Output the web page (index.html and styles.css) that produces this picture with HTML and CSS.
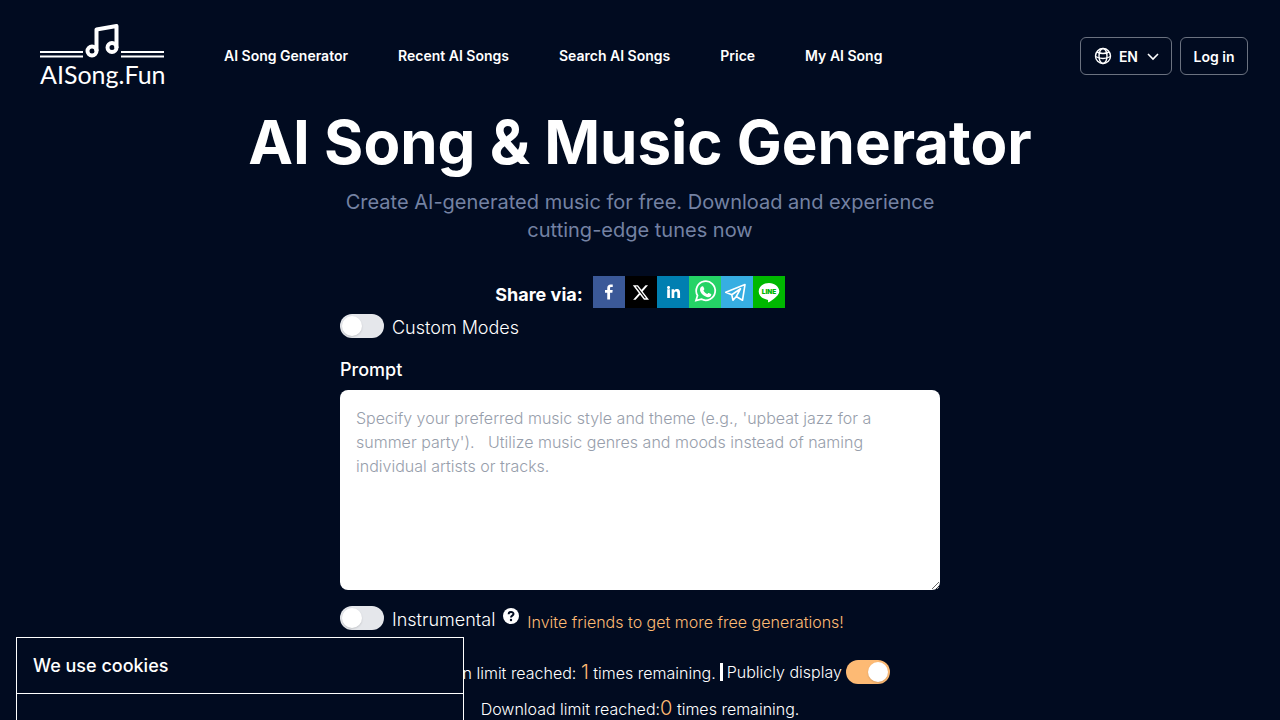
FILE: index.html
```
<!DOCTYPE html>
<html lang="en">
<head>
    <meta charset="UTF-8">
    <meta name="viewport" content="width=device-width, initial-scale=1.0">
    <title>AI Song &amp; Music Generator</title>
    <link rel="stylesheet" href="styles.css">
</head>
<body>
    <header class="header">
        <a class="logo" href="#">
            <svg class="logo-mark" viewBox="0 0 124 35" aria-hidden="true">
                <path class="logo-bars" d="M0 28h43M0 32.500h43M81 28h43M81 32.500h43"/>
                <path class="logo-note" d="M56.500 27V5.500L76.500 2V24"/>
                <circle class="logo-note" cx="52" cy="27" r="4.500"/>
                <circle class="logo-note" cx="72" cy="23.500" r="4.500"/>
            </svg>
            <span class="logo-text">AISong.Fun</span>
        </a>
        <nav class="nav">
            <a href="#">AI Song Generator</a>
            <a href="#">Recent AI Songs</a>
            <a href="#">Search AI Songs</a>
            <a href="#">Price</a>
            <a href="#">My AI Song</a>
        </nav>
        <div class="actions">
            <button class="btn btn-lang" type="button">
                <svg class="globe" viewBox="0 0 20 20" aria-hidden="true">
                    <circle cx="10" cy="10" r="7.500"/>
                    <ellipse cx="10" cy="10" rx="4" ry="7.500"/>
                    <path d="M4 6Q10 9 16 6M2.500 10.500Q10 14.500 17.500 10.500"/>
                </svg>
                <span>EN</span>
                <svg class="chevron" viewBox="0 0 16 16" aria-hidden="true"><path d="M3 6L8 11L13 6"/></svg>
            </button>
            <button class="btn" type="button">Log in</button>
        </div>
    </header>

    <main class="main">
        <h1>AI Song &amp; Music Generator</h1>
        <p class="subtitle">Create AI-generated music for free. Download and experience cutting-edge tunes now</p>

        <div class="share">
            <span class="share-label">Share via:</span>
            <a class="facebook" href="#" aria-label="Facebook">
                <svg viewBox="0 0 64 64"><path fill="#fff" d="M34.1 47V33.300h4.600l.7-5.300h-5.300v-3.400c0-1.500.4-2.600 2.600-2.600h2.800v-4.800c-.5-.1-2.200-.2-4.100-.2-4.100 0-6.900 2.500-6.900 7V28H24v5.300h4.500V47h5.600z"/></svg>
            </a>
            <a class="x" href="#" aria-label="X">
                <svg viewBox="0 0 64 64"><path fill="#fff" d="M41.116 18.375h4.962l-10.840 12.390 12.753 16.860H38.005l-7.821-10.225L21.235 47.625H16.270l11.595-13.252L15.631 18.375H25.870l7.070 9.347zm-1.742 26.280h2.750L24.376 21.190h-2.950z"/></svg>
            </a>
            <a class="linkedin" href="#" aria-label="LinkedIn">
                <svg viewBox="0 0 64 64"><path fill="#fff" d="M20.400 44h5.400V26.600h-5.400V44zm2.700-18c1.700 0 3.100-1.400 3.100-3.100s-1.400-3.100-3.100-3.100-3.100 1.400-3.100 3.100 1.400 3.100 3.100 3.100zm11.500 18h-5.400V26.600h5.200V29h.1c.7-1.400 2.500-2.800 5.100-2.800 5.500 0 6.500 3.600 6.500 8.300V44h-5.400v-8.500c0-2 0-4.600-2.800-4.600s-3.300 2.200-3.300 4.500V44z"/></svg>
            </a>
            <a class="whatsapp" href="#" aria-label="WhatsApp">
                <svg viewBox="0 0 64 64"><path fill="none" stroke="#fff" stroke-width="3.500" d="M14 49l3-10a19 19 0 1 1 7.500 7.200z"/><path fill="#fff" d="M26.500 20.500c1.500-.3 2 .2 2.500 1.500l1.500 3.500c.4 1-.1 1.800-1.700 3.500 2.100 4 4.700 5.900 7.700 7.100 1.100-1.200 1.800-2.700 3.100-2.200l4.200 2.100c1 .5 1 1.200.6 2.700-.8 3-4.400 4.300-7 3.700-8.500-2-15.200-9.100-15.400-15.100 0-3 1.600-6 4.500-6.800z"/></svg>
            </a>
            <a class="telegram" href="#" aria-label="Telegram">
                <svg viewBox="0 0 64 64"><path fill="none" stroke="#fff" stroke-width="3.200" stroke-linejoin="round" d="M9.500 32.500L48 17 43 48.500 30.500 41 24 48.500 21.500 37.500z M21.500 37.500L39 25.500 30.500 41"/></svg>
            </a>
            <a class="line" href="#" aria-label="LINE">
                <svg viewBox="0 0 64 64"><path fill="#fff" d="M52.600 30.900c0-9.200-9.300-16.800-20.600-16.800s-20.600 7.600-20.600 16.800c0 8.300 7.300 15.200 17.300 16.600 2.300.5 1.500 2.500 1.200 5.200 1.800 0 22.700-12.100 22.700-21.800z"/><text class="line-text" x="32" y="36" text-anchor="middle">LINE</text></svg>
            </a>
        </div>

        <form class="form">
            <div class="option">
                <input class="toggle" type="checkbox" id="custom">
                <label for="custom">Custom Modes</label>
            </div>

            <label class="prompt-label" for="prompt">Prompt</label>
            <textarea id="prompt" placeholder="Specify your preferred music style and theme (e.g., 'upbeat jazz for a summer party').   Utilize music genres and moods instead of naming individual artists or tracks."></textarea>

            <div class="option">
                <input class="toggle" type="checkbox" id="instrumental">
                <label for="instrumental">Instrumental</label>
                <svg class="help" viewBox="0 0 16 16" aria-hidden="true"><circle cx="8" cy="8" r="8" fill="#fff"/><path d="M5.600 6.200C5.600 3.200 10.500 3.300 10.500 6C10.500 7.700 8 7.600 8 9.400" fill="none" stroke="#010b20" stroke-width="2"/><circle cx="8" cy="12" r="1.200" fill="#010b20"/></svg>
                <a class="invite" href="#">Invite friends to get more free generations!</a>
            </div>

            <div class="limits">
                <span>Generation limit reached: <span class="count">1</span> times remaining.</span>
                <span class="divider"></span>
                <label for="public">Publicly display</label>
                <input class="toggle" type="checkbox" id="public" checked>
            </div>
            <p class="download">Download limit reached:<span class="count">0</span> times remaining.</p>
        </form>
    </main>

    <section class="cookies">
        <h2>We use cookies</h2>
    </section>
</body>
</html>
```
FILE: styles.css
```
* {
    box-sizing: border-box;
}

body {
    margin: 0;
    background-color: #010b20;
    color: #fff;
    font-family: Inter, sans-serif;
    font-size: 16px;
    line-height: 24px;
}

a {
    color: inherit;
    text-decoration: none;
}

h1, h2, p {
    margin: 0;
}

.header {
    display: flex;
    align-items: center;
    height: 112px;
    padding: 0 32px 0 40px;
}

.logo {
    display: flex;
    flex-direction: column;
    width: 124px;
    margin-right: 60px;
}

.logo-mark {
    width: 124px;
    height: 35px;
}

.logo-bars {
    stroke: #fff;
    stroke-width: 2;
}

.logo-note {
    fill: none;
    stroke: #fff;
    stroke-width: 4;
    stroke-linejoin: round;
}

.logo-text {
    font-family: Lato, sans-serif;
    font-size: 25px;
    line-height: 30px;
    white-space: nowrap;
}

.nav {
    display: flex;
    gap: 50px;
    font-size: 14px;
    font-weight: 600;
}

.actions {
    display: flex;
    gap: 8px;
    margin-left: auto;
}

.btn {
    display: flex;
    align-items: center;
    justify-content: center;
    min-width: 68px;
    height: 38px;
    padding: 0 12px;
    border: 1px solid #6b7280;
    border-radius: 6px;
    background: transparent;
    color: #fff;
    font-family: inherit;
    font-size: 14px;
    font-weight: 600;
    cursor: pointer;
}

.globe {
    width: 20px;
    height: 20px;
    margin-right: 6px;
    fill: none;
    stroke: #fff;
    stroke-width: 1.4;
}

.chevron {
    width: 16px;
    height: 16px;
    margin-left: 7px;
    fill: none;
    stroke: #fff;
    stroke-width: 1.6;
}

.btn-lang {
    padding: 0 10px 0 12px;
}

.main {
    max-width: 1024px;
    margin: 0 auto;
}

h1 {
    font-size: 60px;
    font-weight: 700;
    line-height: 60px;
    text-align: center;
}

.subtitle {
    max-width: 640px;
    margin: 16px auto 32px;
    color: #7482a3;
    font-size: 20px;
    line-height: 28px;
    text-align: center;
}

.share {
    display: flex;
    justify-content: center;
}

.share a, .share svg {
    display: block;
    width: 32px;
    height: 32px;
}

.share-label {
    margin-right: 10px;
    padding-top: 5px;
    font-size: 18px;
    font-weight: 700;
    line-height: 27px;
}

.facebook {
    background-color: #3b5998;
}

.x {
    background-color: #000;
}

.linkedin {
    background-color: #007fb1;
}

.whatsapp {
    background-color: #25d366;
}

.telegram {
    background-color: #37aee2;
}

.line {
    background-color: #00b800;
}

.line-text {
    fill: #00b800;
    font-family: Inter, sans-serif;
    font-size: 13px;
    font-weight: 900;
}

.form {
    max-width: 600px;
    margin: 6px auto 0;
    font-weight: 350;
}

.option {
    display: flex;
    align-items: flex-start;
    gap: 8px;
}

.option label {
    font-size: 18px;
    line-height: 28px;
}

.toggle {
    appearance: none;
    flex: none;
    display: flex;
    width: 44px;
    height: 24px;
    margin: 0;
    padding: 2px;
    border-radius: 12px;
    background-color: #e5e7eb;
    cursor: pointer;
}

.toggle::before {
    content: "";
    width: 20px;
    height: 20px;
    border-radius: 50%;
    background-color: #fff;
    box-shadow: 0 1px 2px rgba(0, 0, 0, 0.15);
}

.toggle:checked {
    justify-content: flex-end;
    background-color: #fdba74;
}

.prompt-label {
    display: block;
    margin: 14px 0 6px;
    font-size: 18px;
    font-weight: 500;
    line-height: 28px;
}

textarea {
    display: block;
    width: 100%;
    height: 200px;
    margin-bottom: 16px;
    padding: 16px;
    border: none;
    border-radius: 8px;
    background-color: #fff;
    color: #111827;
    font-family: inherit;
    font-size: 16px;
    font-weight: 350;
    line-height: 24px;
}

textarea::placeholder {
    color: #979eab;
}

.help {
    width: 16px;
    height: 16px;
    margin-top: 2px;
}

.invite {
    padding-top: 4px;
    color: #fdba74;
}

.limits {
    display: flex;
    align-items: center;
    justify-content: center;
    height: 28px;
    margin-top: 24px;
}

.count {
    color: #fdba74;
    font-size: 20px;
}

.divider {
    width: 3px;
    height: 18px;
    margin: 0 4px;
    background-color: #fff;
}

.limits .toggle {
    margin-left: 4px;
}

.download {
    margin-top: 8px;
    line-height: 28px;
    text-align: center;
}

/* consent panel, its lower part runs past the window edge */
.cookies {
    position: fixed;
    top: 637px;
    left: 16px;
    width: 448px;
    height: 240px;
    border: 1px solid #fff;
    background-color: #010b20;
}

.cookies h2 {
    padding: 14px 16px 13px;
    border-bottom: 1px solid #fff;
    font-size: 18px;
    font-weight: 500;
    line-height: 28px;
}
```
